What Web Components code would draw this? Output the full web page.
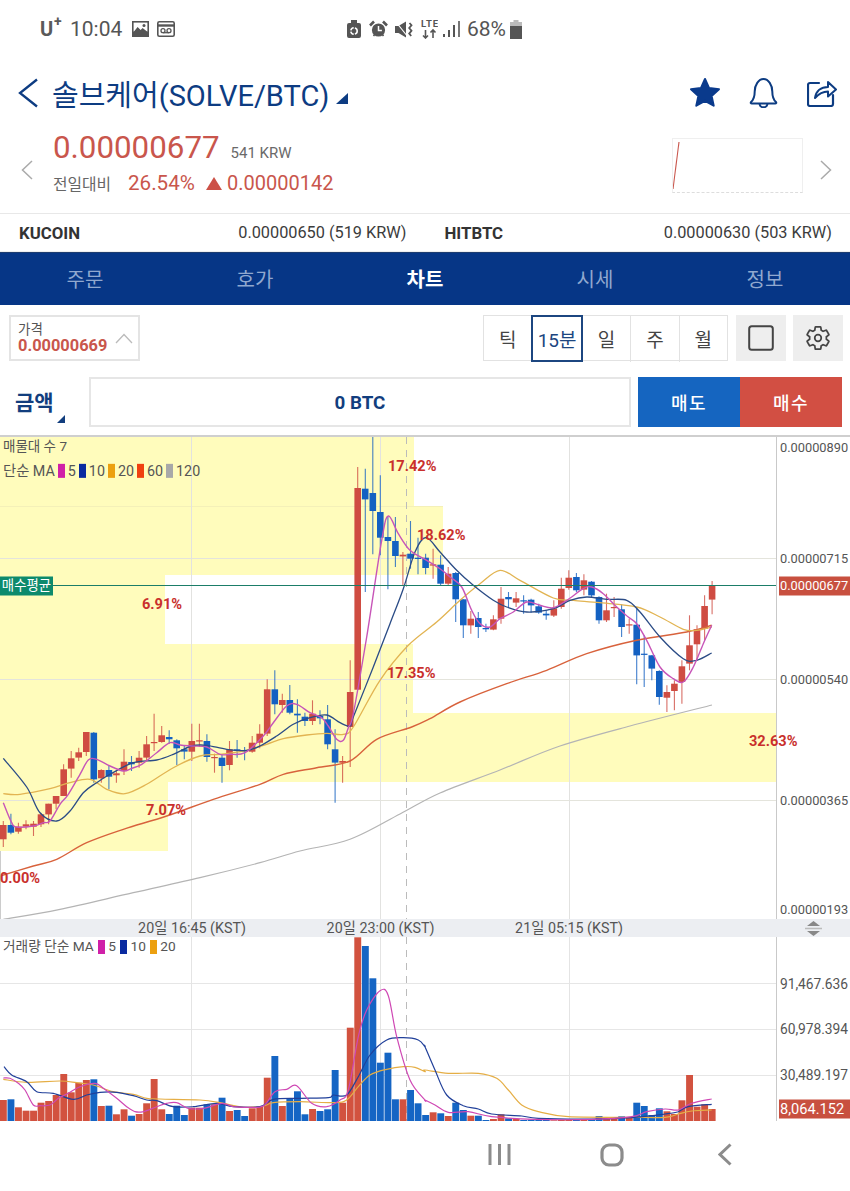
<!DOCTYPE html>
<html lang="ko"><head><meta charset="utf-8"><title>솔브케어</title>
<style>
html,body{margin:0;padding:0;background:#fff}
body{width:850px;height:1191px;overflow:hidden;font-family:Roboto,"Noto Sans CJK KR",sans-serif;display:flex;flex-direction:column}
</style></head><body>
<status-bar></status-bar>
<coin-header>솔브케어(SOLVE/BTC)</coin-header>
<price-summary></price-summary>
<exchange-row></exchange-row>
<tab-bar></tab-bar>
<chart-toolbar></chart-toolbar>
<order-bar></order-bar>
<trade-chart></trade-chart>
<nav-bar></nav-bar>
<script>
const FONT='Roboto,"Noto Sans CJK KR",sans-serif';
function def(name,css,html,after){
  customElements.define(name,class extends HTMLElement{
    constructor(){super();const r=this.attachShadow({mode:'open'});
      r.innerHTML='<style>'+css+'</style>'+html;if(after)after(r);}
  });
}
def('status-bar',`:host{display:flex;height:60px;flex:none;align-items:center;color:#555;font:21px ${FONT};padding:0 0 2px 40px;box-sizing:border-box;position:relative}
.u{font-weight:700;font-size:20px;color:#5a5a5a;width:30px;position:relative}.u sup{font-size:14px;position:absolute;left:14px;top:-3px;line-height:1;font-weight:700}
.t{width:62px}svg{display:block;flex:none}
.gap{flex:none;width:172px}`,
`<span class="u">U<sup>+</sup></span><span class="t">10:04</span>
<svg width="17" height="16" viewBox="0 0 17 16" style="margin-right:8px"><rect x="0" y="0" width="17" height="16" fill="#555"/><rect x="1.6" y="1.6" width="13.8" height="9" fill="#fff"/><path d="M1.6 11l4-5 3 3 2-2 5 4v2H1.6z" fill="#555"/><circle cx="12" cy="4.5" r="1.5" fill="#555"/></svg>
<svg width="18" height="16" viewBox="0 0 18 16"><rect x=".8" y=".8" width="16.4" height="14.4" rx="1.5" fill="none" stroke="#555" stroke-width="1.6"/><path d="M1 4.5h16" stroke="#555" stroke-width="2.4"/><circle cx="6" cy="9.7" r="2" fill="none" stroke="#555" stroke-width="1.3"/><circle cx="12" cy="9.7" r="2" fill="none" stroke="#555" stroke-width="1.3"/><path d="M6 11.7h6" stroke="#555" stroke-width="1.3"/></svg>
<span class="gap"></span>
<svg width="14" height="18" viewBox="0 0 14 18" style="margin-right:8px"><path d="M4 0h6v3h2a2 2 0 0 1 2 2v11a2 2 0 0 1-2 2H2a2 2 0 0 1-2-2V5a2 2 0 0 1 2-2h2z" fill="#555"/><circle cx="7" cy="11" r="3.2" fill="none" stroke="#fff" stroke-width="1.6" stroke-dasharray="4 1.2"/></svg>
<svg width="19" height="18" viewBox="0 0 19 18" style="margin-right:7px"><circle cx="9.5" cy="10" r="6.6" fill="#555"/><path d="M9.5 6v4.4h3.4" fill="none" stroke="#fff" stroke-width="1.5"/><path d="M1 5.5L5 1.5M18 5.5L14 1.5" stroke="#555" stroke-width="2.6"/><path d="M4.5 16l1.5-2M14.5 16L13 14" stroke="#555" stroke-width="1.6"/></svg>
<svg width="18" height="17" viewBox="0 0 18 17" style="margin-right:8px"><path d="M0 5h3.500L11 .5v16L3.500 12H0z" fill="#555"/><path d="M1 1l12 15" stroke="#fff" stroke-width="1.200"/><path d="M14.500 2l2 2.200-2.300 2.800 2.300 2.800-2.300 2.800 2 2.400" fill="none" stroke="#555" stroke-width="1.800"/></svg>
<svg width="17" height="20" viewBox="0 0 17 20" style="margin-right:5px"><text x="0" y="8" font-size="9.5" font-weight="700" fill="#555" font-family="Roboto" textLength="17">LTE</text><path d="M4.5 11v8M2 16.5l2.5 2.5 2.500-2.500M12 19v-8M9.500 13.500L12 11l2.500 2.500" fill="none" stroke="#555" stroke-width="1.6"/></svg>
<svg width="17" height="18" viewBox="0 0 17 18" style="margin-right:7px"><rect x="0" y="14" width="2" height="3" fill="#555"/><rect x="5" y="10" width="2" height="7" fill="#555"/><rect x="10" y="5" width="2" height="12" fill="#555"/><rect x="15" y="1" width="2" height="16" fill="#777"/></svg>
<span style="width:43px">68%</span>
<svg width="12" height="19" viewBox="0 0 12 19"><path d="M3.500 0h5v2H12v4H0V2h3.500z" fill="#bbb"/><rect y="6" width="12" height="13" fill="#555"/></svg>`);

def('coin-header',`:host{display:flex;flex:none;height:65px;align-items:center;box-sizing:border-box;padding:0 0 0 18px;color:#0d3c82;position:relative;top:0}
svg{display:block;flex:none}
.title{font:29px ${FONT};margin-left:13px;white-space:nowrap}
.tri{margin:11px 0 0 7px}.sp{flex:1}`,
`<svg width="21" height="30" viewBox="0 0 21 30"><path d="M19 1.500L2 15l17 13.500" fill="none" stroke="#0d3c82" stroke-width="2.300"/></svg>
<span class="title"><slot></slot></span>
<svg class="tri" width="12" height="11" viewBox="0 0 12 11"><path d="M12 0v11H0z" fill="#0d3c82"/></svg>
<span class="sp"></span>
<svg width="32" height="31" viewBox="0 0 32 31" style="margin-right:28px"><path d="M16 2l4.100 9.100 9.900 1.100-7.400 6.700 2.100 9.800L16 23.800l-8.700 4.900 2.100-9.800L2 12.200l9.900-1.100z" fill="#0a3a8c" stroke="#0a3a8c" stroke-width="2" stroke-linejoin="round"/></svg>
<svg width="29" height="31" viewBox="0 0 29 31" style="margin-right:29px"><path d="M2 25c3-2.500 3.700-5 3.700-10.500C5.700 8 9.500 2 14.500 2s8.800 6 8.800 12.500c0 5.500.7 8 3.700 10.500 .6.800.2 1.500-.8 1.500H2.800c-1 0-1.400-.7-.8-1.500z" fill="none" stroke="#0d3c82" stroke-width="2"/><path d="M10.500 26.500c.5 5 7.500 5 8 0" fill="none" stroke="#0d3c82" stroke-width="2"/></svg>
<svg width="30" height="29" viewBox="0 0 30 29" style="margin-right:13px"><path d="M12 5H3a2 2 0 0 0-2 2v19a2 2 0 0 0 2 2h21a2 2 0 0 0 2-2v-9" fill="none" stroke="#0d3c82" stroke-width="2.200" stroke-linecap="round"/><path d="M8 20c1-7 6-11 13-11V4l8 7.500-8 7V13.500c-5 0-9 2-13 6.500z" fill="none" stroke="#0d3c82" stroke-width="2" stroke-linejoin="round"/></svg>`);

def('price-summary',`:host{display:flex;flex:none;height:88px;box-sizing:border-box;position:relative;color:#666;font-family:${FONT}}
.l{width:53px;flex:none;display:flex;align-items:center;justify-content:flex-start;padding:1px 0 0 21px;box-sizing:border-box}
.m{flex:1;display:flex;flex-direction:column}
.a{display:flex;align-items:baseline;height:44px;padding-top:4px;box-sizing:border-box}
.p{font-size:31.300px;color:#c9564c;line-height:38px}
.k{font-size:15px;margin-left:11px;color:#6a6a6a}
.b{display:flex;align-items:center;height:26px;margin-top:1px;white-space:nowrap}
.lbl{font-size:15.800px;color:#666;width:75px}
.pc{font-size:20.600px;color:#c9564c;width:78px}
.amt{font-size:20px;color:#c9564c;margin-left:5px}
.spark{width:131px;height:55px;border:1px solid #efefef;box-sizing:border-box;margin:13px 0 0;border-bottom:1px dashed #ddd;flex:none}
.r{width:47px;flex:none;display:flex;align-items:center;padding:1px 0 0 17px;box-sizing:border-box}
svg{display:block}`,
`<div class="l"><svg width="12" height="20" viewBox="0 0 12 20"><path d="M11 1L1.500 10 11 19" fill="none" stroke="#aaa" stroke-width="1.500"/></svg></div>
<div class="m"><div class="a"><span class="p">0.00000677</span><span class="k">541 KRW</span></div>
<div class="b"><span class="lbl">전일대비</span><span class="pc">26.54%</span><svg width="16" height="13" viewBox="0 0 16 13"><path d="M8 0l8 13H0z" fill="#cc5147"/></svg><span class="amt">0.00000142</span></div></div>
<div class="spark"><svg width="129" height="52" viewBox="0 0 129 52"><path d="M6 3L0 50" stroke="#c9564c" stroke-width="1.100"/></svg></div>
<div class="r"><svg width="12" height="20" viewBox="0 0 12 20"><path d="M1 1l9.500 9L1 19" fill="none" stroke="#aaa" stroke-width="1.500"/></svg></div>`);

def('exchange-row',`:host{display:flex;flex:none;height:39px;box-sizing:border-box;border-top:1.500px solid #e8e8e8;border-bottom:1px solid #eee;align-items:center;font:16.300px ${FONT};color:#3c3c3c;padding:1px 18px 0 19px}
b{color:#333;font-weight:700;font-size:16.800px}.v{white-space:nowrap}
.g{display:flex;justify-content:space-between}.g1{width:388px}.g2{width:388px;margin-left:38px}`,
`<div class="g g1"><b>KUCOIN</b><span class="v">0.00000650 (519 KRW)</span></div>
<div class="g g2"><b>HITBTC</b><span class="v">0.00000630 (503 KRW)</span></div>`);

def('tab-bar',`:host{display:grid;grid-template-columns:repeat(5,170px);flex:none;height:53px;background:#063686;border-top:1px solid #1d3d70;box-sizing:border-box;font:20px ${FONT};color:#90a8cf;align-items:center;text-align:center}
span{padding-bottom:1px}.on{color:#fff;font-weight:700}`,
`<span>주문</span><span>호가</span><span class="on">차트</span><span>시세</span><span>정보</span>`);

def('chart-toolbar',`:host{display:flex;flex:none;height:72px;padding:10px 7px 0 9px;box-sizing:border-box;font-family:${FONT};align-items:flex-start}
.price{width:131px;height:46px;border:2px solid #e4e4e4;box-sizing:border-box;padding:4px 0 0 7px;position:relative;color:#555}
.price .c{font-size:13.500px;line-height:16px}.price .n{font-size:16.400px;font-weight:700;color:#c9564c;line-height:17px}
.price svg{position:absolute;left:104px;top:16px}
.sp{flex:1}
.group{display:flex;width:245px;height:46px;border:1.500px solid #e2e2e2;box-sizing:border-box;margin-right:8px}
.group span{flex:1;display:flex;align-items:center;justify-content:center;font-size:19px;color:#444;border-right:1.500px solid #e2e2e2;box-sizing:border-box;margin:-1.500px 0}
.group span:last-child{border-right:0}
.group .on{color:#1c4680;border:2px solid #1c4680;margin:-1.500px 0 -1.500px -1px}
.ico{width:50px;height:46px;background:#eeeeee;display:flex;align-items:center;justify-content:center}
.ico+.ico{margin-left:7px}`,
`<div class="price"><div class="c">가격</div><div class="n">0.00000669</div><svg width="18" height="11" viewBox="0 0 18 11"><path d="M1 10l8-8.500 8 8.500" fill="none" stroke="#bbb" stroke-width="1.300"/></svg></div>
<span class="sp"></span>
<div class="group"><span>틱</span><span class="on">15분</span><span>일</span><span>주</span><span>월</span></div>
<div class="ico"><svg width="26" height="26" viewBox="0 0 26 26"><rect x="1.200" y="1.200" width="23.600" height="23.600" rx="2.500" fill="none" stroke="#444" stroke-width="2"/></svg></div>
<div class="ico"><svg width="28" height="28" viewBox="0 0 24 24"><path d="M19.140 12.940c.04-.3.06-.61.06-.94 0-.32-.02-.64-.07-.94l2.030-1.580c.18-.14.23-.41.12-.61l-1.920-3.320c-.12-.22-.37-.29-.59-.22l-2.390.96c-.5-.38-1.030-.7-1.620-.94l-.36-2.540c-.04-.24-.24-.41-.48-.41h-3.840c-.24 0-.43.17-.47.41l-.36 2.540c-.59.24-1.130.57-1.620.94l-2.390-.96c-.22-.08-.47 0-.59.22L2.740 8.870c-.12.21-.08.47.12.61l2.030 1.580c-.05.3-.09.63-.09.94s.02.64.07.94l-2.030 1.580c-.18.14-.23.41-.12.61l1.920 3.320c.12.22.37.29.59.22l2.390-.96c.5.38 1.030.7 1.620.94l.36 2.540c.05.24.24.41.48.41h3.840c.24 0 .44-.17.47-.41l.36-2.540c.59-.24 1.130-.56 1.620-.94l2.390.96c.22.08.47 0 .59-.22l1.920-3.320c.12-.22.07-.47-.12-.61l-2.010-1.580z" fill="none" stroke="#444" stroke-width="1.500"/><circle cx="12" cy="12" r="2.800" fill="none" stroke="#444" stroke-width="1.500"/></svg></div>`);

def('order-bar',`:host{display:flex;flex:none;height:58px;box-sizing:border-box;padding:0 8px 8px 0;font-family:${FONT};align-items:stretch}
.lab{width:89px;flex:none;position:relative;font-size:21px;font-weight:700;color:#123e7e;padding-left:15px;box-sizing:border-box;line-height:52px}
.lab svg{position:absolute;left:57px;top:38px}
.inp{width:542px;flex:none;border:2px solid #e6e6e6;box-sizing:border-box;display:flex;align-items:center;justify-content:center;font-size:18.800px;font-weight:700;color:#123e7e;padding-top:1px}
.b{width:102px;flex:none;color:#fff;display:flex;align-items:center;justify-content:center;font-size:18px;font-weight:500;letter-spacing:1.500px}
.s{background:#1565c0;margin-left:7px}.u{background:#d24f43}`,
`<div class="lab">금액<svg width="8" height="8" viewBox="0 0 8 8"><path d="M8 0v8H0z" fill="#123e7e"/></svg></div><div class="inp">0 BTC</div><div class="b s">매도</div><div class="b u">매수</div>`);

/* chart data: coordinates read off the reference, in zoomed-crop units */
const z5=p=>[p[0]/3,660+p[1]/3], z6=p=>[340+p[0]/3,436+p[1]/3], z7=p=>[p[0]/3,930+p[1]/3], z8=p=>[425+p[0]/3,910+p[1]/3];
const CX=i=>3.33+7.54*i;
const A=[[480,492,535,558,'r'],[458,492,515,520,'b'],[485,497,512,518,'r'],[478,490,497,505,'r'],[480,488,497,525,'r'],[455,460,490,498,'r'],[428,428,460,490,'r'],[405,405,428,445,'r'],[310,325,405,405,'r'],[270,292,323,350,'r'],[260,274,290,300,'r'],[213,213,273,285,'r'],[213,215,355,365,'b'],[325,327,352,365,'r'],[315,327,347,385,'b'],[330,337,343,365,'r'],[265,302,330,342,'r'],[285,303,310,330,'b'],[270,290,305,320,'r'],[225,250,290,300,'r'],[158,243,246,270,'r'],[195,223,243,245,'r'],[208,228,235,248,'b'],[235,238,262,312,'b'],[255,265,272,295,'b'],[188,240,272,300,'r'],[188,238,240,258,'r'],[220,240,288,302,'b'],[278,288,290,335,'r'],[280,290,315,365,'b'],[240,265,312,328,'r'],[237,265,268,290,'b'],[258,268,272,298,'b'],[225,245,272,275,'r'],[190,218,245,262,'r'],[55,85,218,225,'r'],[28,85,130,160,'b'],[98,117,132,155,'r'],[72,117,155,160,'b'],[115,158,163,215,'b'],[155,167,180,195,'b'],[118,158,180,192,'r'],[148,165,172,190,'b'],[132,175,250,265,'b'],[205,265,305,425,'b'],[285,300,305,365,'r']];
const B=[[670,765,870,990,'r'],[90,153,758,758,'r'],[95,155,187,465,'b'],[0,168,222,352,'b'],[115,225,302,355,'b'],[240,300,312,457,'b'],[240,312,357,390,'b'],[345,353,358,445,'r'],[252,350,365,395,'b'],[302,362,366,412,'b'],[350,362,393,412,'b'],[335,382,386,425,'r'],[355,383,440,445,'b'],[390,410,440,445,'r'],[405,408,487,555,'b'],[487,487,565,603,'b'],[522,545,565,590,'r'],[525,543,570,603,'b'],[560,573,577,585,'b'],[535,547,578,580,'r'],[450,485,545,560,'r'],[465,480,487,510,'b'],[465,484,497,510,'r'],[475,490,493,530,'b'],[485,488,505,527,'b'],[500,508,527,530,'b'],[520,530,535,548,'b'],[490,514,536,540,'r'],[422,455,510,515,'r'],[400,422,453,458,'r'],[408,420,460,465,'b'],[412,430,458,475,'r'],[432,434,475,480,'b'],[478,480,550,560,'b'],[470,520,550,555,'r'],[480,510,512,540,'r'],[502,517,570,600,'b'],[545,562,565,590,'r'],[510,563,655,742,'b'],[595,650,653,750,'b'],[655,655,695,730,'b'],[700,702,780,803,'b'],[745,765,782,825,'r'],[730,740,762,820,'r'],[670,688,735,800,'r'],[535,625,680,700,'r'],[565,577,622,670,'r'],[475,507,575,610,'r'],[432,445,488,532,'r']];
const RED='#cf4c42',BLU='#1461c2';
/* smooth curve through the read-off points (Catmull-Rom to Bezier) */
const poly=(p,c,w)=>{
  const f=n=>n.toFixed(1);let d='M'+f(p[0][0])+' '+f(p[0][1]);
  for(let i=0;i<p.length-1;i++){
    const a=p[Math.max(i-1,0)],b=p[i],e=p[i+1],g=p[Math.min(i+2,p.length-1)];
    d+=`C${f(b[0]+(e[0]-a[0])/6)} ${f(b[1]+(e[1]-a[1])/6)} ${f(e[0]-(g[0]-b[0])/6)} ${f(e[1]-(g[1]-b[1])/6)} ${f(e[0])} ${f(e[1])}`;
  }
  return `<path fill="none" stroke="${c}" stroke-width="${w||1.2}" stroke-linejoin="round" d="${d}"/>`;
};
const P=s=>s.trim().split(/\s+/).map(t=>t.split(',').map(Number));
const M5=[...P('10,425 35,485 50,498 100,495 130,485 150,480 180,430 205,400 240,340 265,297 290,295 330,315 370,330 395,322 425,310 470,275 510,245 540,252 575,255 620,258 660,280 690,280 735,275 790,225 820,185 860,135 890,130 930,155 965,170 985,195 1010,235 1030,238 1045,200').map(z5),...P('40,830 80,600 125,310 145,237 175,290 210,340 260,370 300,395 330,420 365,450 395,520 420,560 450,570 480,545 520,525 560,495 600,505 640,512 680,490 730,455 755,450 790,470 830,510 865,540 890,560 920,610 960,690 1000,725 1030,735 1060,690 1090,620 1115,565').map(z6)];
const M10=[...P('10,292 80,378 120,455 170,480 210,450 250,395 290,365 330,340 400,305 470,297 520,280 575,255 620,253 680,265 740,268 780,255 830,225 880,190 930,170 980,162 1020,185 1050,195').map(z5),...P('40,840 100,690 150,560 190,455 225,345 258,302 300,345 350,400 400,445 460,490 500,510 560,525 640,515 690,490 740,480 800,487 860,490 900,525 960,600 1030,665 1070,670 1115,648').map(z6)];
const M20=[...P('10,398 60,400 150,383 210,365 270,355 320,385 375,398 440,370 520,320 600,285 660,280 740,268 800,250 850,233 920,222 980,217 1030,220').map(z5),...P('40,870 120,730 205,625 290,555 360,490 420,440 480,400 540,430 640,483 700,490 780,497 890,510 960,540 1030,577 1070,580 1115,570').map(z6)];
const M60=[...P('0,645 100,615 170,595 260,545 370,505 500,465 640,415 780,370 850,340 950,320 1050,300 1130,235').map(z5),...P('215,870 270,845 360,795 500,740 620,700 740,650 890,610 1040,585 1115,565').map(z6)];
const M120=[...P('10,775 180,745 400,695 600,650 780,605 900,570 1050,535').map(z5),[400,813],[440,792],[500,769],[560,745],[630,725],[712,704]];
const VTOP=[...[510,508,532,542,542,518,513,495,432,487,458,450,448,528,527,553,538,557,552,520,447,538,552,527,555,533,533,523,523,503,543,540,558,535,530,443,378,528,505,484,553,537,543,538,420,518,293,22,48,145,398,368,508,508,480,520].map(y=>930+y/3),...[615,607,610,618,578,600,617,617,630,627,613,625,627,630,629,630,630,631,630,630,630,630,628,618,625,626,619,622,578,588,615,595,604,612,571,495,590,583,597].map(y=>910+y/3)];
const ALLC=[...A,...B];
const VM5=[...P('10,444 30,445 55,460 75,480 100,525 120,527 150,525 175,505 205,490 240,470 285,460 310,475 350,505 380,530 405,545 430,545 470,530 500,520 530,518 565,535 610,535 665,520 700,530 745,532 790,528 825,485 860,478 890,467 935,520 980,530 1020,510 1045,480 1075,320 1100,240 1140,182 1165,197 1190,320 1230,450 1275,510').map(z7),...P('0,570 30,585 70,607 130,605 200,620 330,628 500,628 620,620 665,605 720,597 760,600 800,580 860,567').map(z8)];
const VM10=[...P('12,410 35,435 80,455 110,485 160,490 220,508 260,495 300,487 350,487 400,497 440,510 470,512 520,530 580,530 650,520 700,530 780,530 820,508 900,505 985,503 1000,495 1040,495 1075,440 1110,375 1160,330 1210,323 1255,330 1275,350').map(z7),...P('0,410 30,480 65,555 115,587 160,597 200,612 290,618 340,625 500,627 620,623 720,612 760,605 790,590 860,583').map(z8)];
const VM20=[...P('10,448 80,457 180,453 230,458 280,465 340,485 400,493 440,505 480,507 600,510 660,518 730,532 790,528 820,518 900,515 1000,518 1040,510 1075,470 1110,435 1160,418 1210,410 1245,412 1275,425').map(z7),...P('0,480 70,490 160,490 215,505 250,540 290,585 340,605 430,620 620,622 720,622 760,612 800,603 860,600').map(z8)];

function priceSvg(){
  let s='';
  const Z='#fffcbc';
  [[436,69,414],[505,69,443],[574,69,165],[643,69,413],[712,69,776],[781,69,168]].forEach(z=>{s+=`<rect x="0" y="${z[0]}" width="${z[2]}" height="${z[1]}" fill="${Z}"/>`});
  [557,678,799].forEach(y=>{s+=`<path d="M0 ${y}.5H776" stroke="#e4e4dc" stroke-width="1"/>`});
  s+=`<path d="M0 505.500H443" stroke="#f4f0b8"/>`;
  [191,380,569].forEach(x=>{s+=`<path d="M${x}.5 436V918" stroke="#e2e2e0" stroke-width="1"/>`});
  s+=`<path d="M406.500 436V918" stroke="#bbb" stroke-dasharray="7 6" stroke-width="1"/>`;
  ALLC.forEach((c,i)=>{
    const f=i<A.length?z5:z6,x=CX(i),col=c[4]=='r'?RED:BLU;
    const w0=f([0,c[0]])[1],t=f([0,c[1]])[1],b=f([0,c[2]])[1],w1=f([0,c[3]])[1];
    s+=`<path d="M${x.toFixed(1)} ${w0.toFixed(1)}V${w1.toFixed(1)}" stroke="${col}" stroke-width="1.100" opacity=".8"/>`;
    s+=`<rect x="${(x-3.3).toFixed(1)}" y="${t.toFixed(1)}" width="6.600" height="${Math.max(b-t,1.2).toFixed(1)}" fill="${col}"/>`;
  });
  s+=poly(M120,'#b4b4b4');
  s+=poly(M60,'#d8623c',1.4);
  s+=poly(M20,'#e2b452',1.3);
  s+=poly(M10,'#2b4c86',1.3);
  s+=poly(M5,'#c755b8',1.4);
  s+=`<path d="M0 584.500H776" stroke="#1b7d68" stroke-width="1.200"/>`;
  s+=`<path d="M.5 918V850" stroke="#ccc"/>`;
  return `<svg width="850" height="482" viewBox="0 436 850 482">${s}</svg>`;
}
function volSvg(){
  let s='';
  [983,1029,1075].forEach(y=>{s+=`<path d="M0 ${y}.5H776" stroke="#e6e6e6"/>`});
  [191,380,569].forEach(x=>{s+=`<path d="M${x}.5 937V1121" stroke="#e4e4e4"/>`});
  s+=`<path d="M406.500 937V1121" stroke="#bbb" stroke-dasharray="7 6"/>`;
  VTOP.forEach((y,i)=>{const c=ALLC[i][4];s+=`<rect x="${(CX(i)-3.4).toFixed(1)}" y="${y.toFixed(1)}" width="6.900" height="${(1121-y).toFixed(1)}" fill="${c=='r'?'#d2523f':'#1565c4'}"/>`});
  s+=poly(VM20,'#e5ae45',1.2)+poly(VM10,'#21409a',1.2)+poly(VM5,'#cf48b4',1.2);
  return `<svg width="850" height="184" viewBox="0 937 850 184">${s}</svg>`;
}
def('trade-chart',`:host{display:flex;flex-direction:column;flex:none;height:686px;font-family:${FONT};color:#555}
.pane{position:relative;overflow:hidden}
.pane svg{display:block}
.top{height:484px;border-top:2px solid #cfcfcf;box-sizing:border-box}
.vol{height:184px}
.axis{position:absolute;left:776px;top:0;bottom:0;width:1px;background:#c9c9c9}
.t{height:18px;background:#eceef2;position:relative;font-size:14.300px;flex:none;color:#555}
.t span{position:absolute;top:0;line-height:19px;transform:translateX(-50%);white-space:nowrap}
.t svg{position:absolute;left:805px;top:2px}
.y,.pct,.tag,.leg{position:absolute;white-space:nowrap;line-height:1;transform:translateY(-50%)}
.y{left:780px;font-size:12.800px;color:#555}
.vy{font-size:13.800px;letter-spacing:-.05px}
.pct{font-weight:700;font-size:14.600px;color:#c9302c}
.tag{color:#fff;font-size:13px;box-sizing:border-box;display:flex;align-items:center}
.leg{left:3px;font-size:14.300px;display:flex;align-items:center;color:#555}
.leg.h{font-size:13.500px}
.leg i{display:block;width:7px;height:14px;margin:0 3px}
.leg.v{font-size:13.700px}.leg.v i{margin:0 3.500px 0 4px}`,
`<div class="pane top" id="p"></div><div class="t"><span style="left:192px">20일 16:45 (KST)</span><span style="left:380.500px">20일 23:00 (KST)</span><span style="left:569px">21일 05:15 (KST)</span>
<svg width="17" height="15" viewBox="0 0 17 15"><path d="M8.500 0L15 5H2z" fill="#888"/><path d="M8.500 15L15 10H2z" fill="#888"/><path d="M0 7.500h17" stroke="#bbb" stroke-width="1.500"/></svg></div><div class="pane vol" id="v"></div>`,
r=>{
  const p=r.getElementById('p'),v=r.getElementById('v');
  const Y0=436,V0=937;
  const lab=(cls,x,y,t,extra)=>`<span class="${cls}" style="${x==null?'':'left:'+x+'px;'}top:${y}px;${extra||''}">${t}</span>`;
  let h=priceSvg()+'<div class="axis"></div>';
  h+=`<div class="leg h" style="top:${445.5-Y0}px">매물대 수 7</div>`;
  const sw=(c)=>`<i style="background:${c}"></i>`;
  h+=`<div class="leg" style="top:${469.5-Y0}px">단순 MA${sw('#d020a8')}5${sw('#0a2aa0')}10${sw('#eca010')}20${sw('#f04010')}60${sw('#a8a8a8')}120</div>`;
  [['17.42%',388,465],['18.62%',417,534],['6.91%',142,603],['17.35%',387,672],['32.63%',749,740],['7.07%',146,809],['0.00%',0,877]].forEach(a=>h+=lab('pct',a[1],a[2]-Y0,a[0]));
  [['0.00000890',446.5],['0.00000715',557.5],['0.00000540',678.5],['0.00000365',799.5],['0.00000193',908.5]].forEach(a=>h+=lab('y',780,a[1]-Y0,a[0]));
  h+=lab('tag',0,584.5-Y0,'매수평균','width:53px;height:19px;background:#0d8a6c;justify-content:center;font-size:13.400px');
  h+=lab('tag',779,584.5-Y0,'0.00000677','width:71px;height:19px;background:#c8503f;padding-left:1px;font-size:12.800px');
  p.innerHTML=h;
  let g=volSvg()+'<div class="axis"></div>';
  g+=`<div class="leg v" style="top:${947-V0}px">거래량 단순 MA${sw('#d020a8')}5${sw('#0a2aa0')}10${sw('#eca010')}20</div>`;
  [['91,467.636',985],['60,978.394',1030],['30,489.197',1076]].forEach(a=>g+=lab('y vy',780,a[1]-V0,a[0]));
  g+=lab('tag',779,1109-V0,'8,064.152','width:71px;height:19px;background:#c8503f;padding-left:1px;font-size:14.600px');
  v.innerHTML=g;
});
def('nav-bar',`:host{display:flex;flex:1;align-items:center;min-height:0;padding:0 0 3px 488px;box-sizing:border-box}
svg{display:block;flex:none}`,
`<svg width="23" height="23" viewBox="0 0 23 23" style="margin-right:89px"><path d="M2 1v21M11.500 1v21M21 1v21" stroke="#8c8c8c" stroke-width="3"/></svg>
<svg width="24" height="24" viewBox="0 0 24 24" style="margin-right:94px"><rect x="2" y="2" width="20" height="20" rx="7" fill="none" stroke="#8c8c8c" stroke-width="3.200"/></svg>
<svg width="14" height="23" viewBox="0 0 14 23"><path d="M12.500 1.500L2 11.500l10.500 10" fill="none" stroke="#8c8c8c" stroke-width="3"/></svg>`);
</script>
</body></html>
